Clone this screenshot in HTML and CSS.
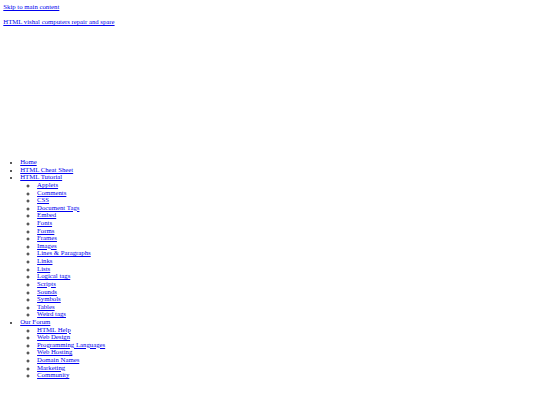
FILE: index.html
```html
<!DOCTYPE html>
<html lang="en">
<head>
<meta charset="utf-8">
<title>HTML vishal computers repair and spare</title>
<link rel="stylesheet" href="styles.css">
</head>
<body>
<a class="skip-link" href="#main">Skip to main content</a>
<p class="site-title"><a href="#">HTML vishal computers repair and spare</a></p>
<div class="ad-space"></div>
<nav>
<ul class="menu">
  <li><a href="#">Home</a></li>
  <li><a href="#">HTML Cheat Sheet</a></li>
  <li><a href="#">HTML Tutorial</a>
    <ul class="submenu">
      <li><a href="#">Applets</a></li>
      <li><a href="#">Comments</a></li>
      <li><a href="#">CSS</a></li>
      <li><a href="#">Document Tags</a></li>
      <li><a href="#">Embed</a></li>
      <li><a href="#">Fonts</a></li>
      <li><a href="#">Forms</a></li>
      <li><a href="#">Frames</a></li>
      <li><a href="#">Images</a></li>
      <li><a href="#">Lines &amp; Paragraphs</a></li>
      <li><a href="#">Links</a></li>
      <li><a href="#">Lists</a></li>
      <li><a href="#">Logical tags</a></li>
      <li><a href="#">Scripts</a></li>
      <li><a href="#">Sounds</a></li>
      <li><a href="#">Symbols</a></li>
      <li><a href="#">Tables</a></li>
      <li><a href="#">Weird tags</a></li>
    </ul>
  </li>
  <li><a href="#">Our Forum</a>
    <ul class="submenu">
      <li><a href="#">HTML Help</a></li>
      <li><a href="#">Web Design</a></li>
      <li><a href="#">Programming Languages</a></li>
      <li><a href="#">Web Hosting</a></li>
      <li><a href="#">Domain Names</a></li>
      <li><a href="#">Marketing</a></li>
      <li><a href="#">Community</a></li>
    </ul>
  </li>
</ul>
</nav>
<div id="main"></div>
</body>
</html>
```
FILE: styles.css
```css
html {
  background: #ffffff;
}
body {
  margin: 3.3px;
  font-family: "Liberation Serif", "Times New Roman", serif;
  font-size: 6.75px;
  line-height: 7.61px;
  color: #000000;
}
a {
  color: #0000ee;
  text-decoration: underline;
}
.skip-link {
  display: block;
}
.site-title {
  margin: 7.3px 0 0 0;
}
.ad-space {
  height: 125.6px;
}
.menu {
  margin: 6.75px 0;
  padding-left: 16.9px;
  list-style: disc;
}
.menu li::marker {
  font-size: 5.2px;
  color: #222222;
}
.submenu {
  margin: 0;
  padding-left: 16.9px;
  list-style: circle;
}
```
